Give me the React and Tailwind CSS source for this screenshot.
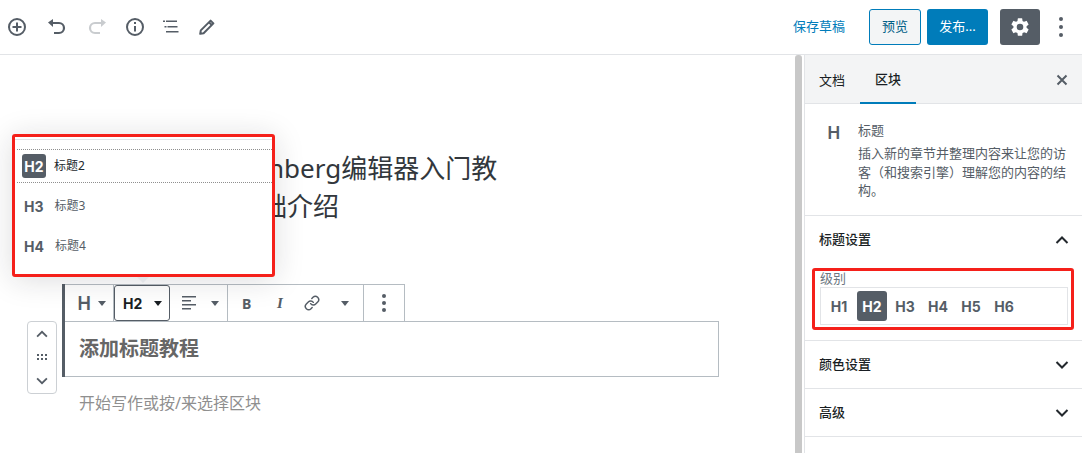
import { Link as LinkIcon } from "lucide-react";

const cjk = { fontFamily: '"Noto Sans", "Noto Sans CJK SC", sans-serif' };

function Caret({ className = "text-[#555d66]" }) {
  return (
    <svg width="8" height="5" viewBox="0 0 8 5" className={className}>
      <path d="M0 0h8L4 5z" fill="currentColor" />
    </svg>
  );
}

function Chevron({ up, size = 18, className = "text-[#23282d]" }) {
  return (
    <svg width={size} height={size} viewBox="0 0 18 18" className={className} fill="none" stroke="currentColor" strokeWidth="2">
      {up ? <path d="M3.5 12L9 6.5l5.5 5.5" /> : <path d="M3.5 6L9 11.5 14.5 6" />}
    </svg>
  );
}

function TopBar() {
  return (
    <header className="flex h-[55px] shrink-0 items-center border-b border-[#e2e4e7] bg-white">
      <div className="flex items-center text-[#555d66]">
        <div className="flex w-[34px] justify-center">
          <svg width="20" height="20" viewBox="0 0 20 20" fill="none" stroke="currentColor" strokeWidth="2">
            <circle cx="10" cy="10" r="8" />
            <path d="M10 5.5v9M5.5 10h9" />
          </svg>
        </div>
        <div className="ml-[3px] flex w-[40px] justify-center">
          <svg width="24" height="24" viewBox="0 0 24 24" fill="none">
            <path d="M8 4L3 7.5 8 12z" fill="currentColor" />
            <path d="M7 8h7a5 5 0 0 1 0 10H9" stroke="currentColor" strokeWidth="2.2" />
          </svg>
        </div>
        <div className="flex w-[40px] justify-center text-[#c9cccf]">
          <svg width="24" height="24" viewBox="0 0 24 24" fill="none">
            <path d="M16 4l5 3.5-5 4.5z" fill="currentColor" />
            <path d="M17 8h-7a5 5 0 0 0 0 10h5" stroke="currentColor" strokeWidth="2.2" />
          </svg>
        </div>
        <div className="flex w-[36px] justify-center">
          <svg width="20" height="20" viewBox="0 0 20 20" fill="none" stroke="currentColor" strokeWidth="2">
            <circle cx="10" cy="10" r="8" />
            <path d="M10 9v5.5M10 5v2" />
          </svg>
        </div>
        <div className="flex w-[36px] justify-center">
          <svg width="16" height="14" viewBox="0 0 16 14" fill="currentColor">
            <rect x="0" y="0.5" width="2" height="1.5" />
            <rect x="3" y="0.5" width="11" height="1.5" />
            <rect x="1.5" y="6" width="2" height="1.5" />
            <rect x="4.5" y="6" width="10" height="1.5" />
            <rect x="3" y="11" width="2" height="1.5" />
            <rect x="5" y="11" width="10.5" height="1.5" />
          </svg>
        </div>
        <div className="flex w-[36px] justify-center">
          <svg width="18" height="18" viewBox="0 0 18 18" fill="none" stroke="currentColor" strokeWidth="2">
            <path d="M2.2 15.8l.6-3.4L12.6 2.6l2.8 2.8-9.8 9.8z" strokeLinejoin="round" />
            <path d="M11 4.2l2.8 2.8" />
          </svg>
        </div>
      </div>
      <div className="ml-auto flex items-center">
        <span className="text-[13px] text-[#007cba]">保存草稿</span>
        <button className="ml-[24px] h-[36px] w-[52px] rounded-[3px] border border-[#007cba] bg-[#f3f5f6] text-[13px] text-[#016087]">
          预览
        </button>
        <button className="ml-[6px] h-[36px] w-[61px] rounded-[3px] bg-[#007cba] text-[13px] text-white">发布...</button>
        <button className="ml-[12px] flex h-[36px] w-[40px] items-center justify-center rounded-[3px] bg-[#555d66] text-white">
          <svg width="22" height="22" viewBox="0 0 24 24" fill="currentColor">
            <path d="M19.14 12.94c.04-.3.06-.61.06-.94s-.02-.64-.07-.94l2.03-1.58a.49.49 0 0 0 .12-.61l-1.92-3.32a.49.49 0 0 0-.59-.22l-2.39.96a7 7 0 0 0-1.62-.94l-.36-2.54a.48.48 0 0 0-.48-.41h-3.84a.48.48 0 0 0-.47.41l-.36 2.54c-.59.24-1.13.57-1.62.94l-2.39-.96a.49.49 0 0 0-.59.22L2.74 8.87a.48.48 0 0 0 .12.61l2.03 1.58c-.05.3-.09.63-.09.94s.02.64.07.94l-2.03 1.58a.49.49 0 0 0-.12.61l1.92 3.32c.12.22.37.29.59.22l2.39-.96c.5.38 1.03.7 1.62.94l.36 2.54c.05.24.24.41.48.41h3.84c.24 0 .44-.17.47-.41l.36-2.54a7 7 0 0 0 1.62-.94l2.39.96c.22.08.47 0 .59-.22l1.92-3.32a.48.48 0 0 0-.12-.61l-2.01-1.58zM12 15.6A3.6 3.6 0 1 1 12 8.4a3.6 3.6 0 0 1 0 7.2z" />
          </svg>
        </button>
        <div className="flex w-[42px] flex-col items-center gap-[4px]">
          <span className="h-[4px] w-[4px] rounded-full bg-[#555d66]" />
          <span className="h-[4px] w-[4px] rounded-full bg-[#555d66]" />
          <span className="h-[4px] w-[4px] rounded-full bg-[#555d66]" />
        </div>
      </div>
    </header>
  );
}

function HeadingPopover() {
  return (
    <div className="absolute left-[12px] top-[79px] z-20 h-[143px] w-[263px] rounded-[3px] border-[3px] border-[#f5201a] bg-white shadow-[0_3px_30px_rgba(25,30,35,0.15)]">
      <div className="mt-[2px] border-t border-[#e2e4e7]" />
      <div className="pl-[2px] pt-[9px]">
        <div className="flex h-[34px] items-center gap-[8px] border-y border-dotted border-[#8f8f8f] pl-[5px]">
          <span className="flex h-[24px] w-[24px] items-center justify-center rounded-[3px] bg-[#555d66] text-[14px] font-bold text-white" style={{ fontFamily: "Inter, sans-serif" }}>
            H2
          </span>
          <span className="text-[12px] text-[#23282d]">标题2</span>
        </div>
        <div className="flex h-[40px] items-center gap-[11px] pl-[7px] pt-[6px]">
          <span className="text-[14px] font-bold text-[#555d66]" style={{ fontFamily: "Inter, sans-serif" }}>H3</span>
          <span className="text-[12px] text-[#555d66]">标题3</span>
        </div>
        <div className="flex h-[40px] items-center gap-[11px] pl-[7px] pt-[6px]">
          <span className="text-[14px] font-bold text-[#555d66]" style={{ fontFamily: "Inter, sans-serif" }}>H4</span>
          <span className="text-[12px] text-[#555d66]">标题4</span>
        </div>
      </div>
      <span className="absolute left-[122px] top-[140px] h-0 w-0 border-x-[6px] border-t-[6px] border-x-transparent border-t-[#e2e4e7]" />
    </div>
  );
}

function BlockToolbar() {
  return (
    <div className="flex h-[37px] w-[340px] border border-b-0 border-l-0 border-[#b5bcc2] bg-white">
      <div className="flex w-[49px] items-center gap-[7px] border-r border-[#b5bcc2] pl-[12px]">
        <span className="text-[19px] font-semibold leading-none text-[#555d66]">H</span>
        <Caret />
      </div>
      <div className="flex h-[36px] w-[56px] items-center gap-[12px] rounded-[3px] border border-[#555d66] pl-[8px]">
        <span className="text-[14px] font-bold text-[#191e23]" style={{ fontFamily: "Inter, sans-serif" }}>H2</span>
        <Caret className="text-[#191e23]" />
      </div>
      <div className="flex w-[58px] items-center gap-[14px] border-r border-[#b5bcc2] pl-[12px]">
        <svg width="15" height="14" viewBox="0 0 15 14" fill="#555d66">
          <rect y="0" width="14" height="1.5" />
          <rect y="4" width="9" height="1.5" />
          <rect y="8" width="14" height="1.5" />
          <rect y="12" width="9" height="1.5" />
        </svg>
        <Caret />
      </div>
      <div className="flex w-[136px] items-center border-r border-[#b5bcc2] pl-[14px] text-[#555d66]">
        <span className="w-[10px] text-[14px] font-bold">B</span>
        <span className="ml-[25px] w-[10px] text-[15px] font-bold italic" style={{ fontFamily: '"Liberation Serif", serif' }}>I</span>
        <LinkIcon size={16} strokeWidth={2.2} className="ml-[17px]" />
        <span className="ml-[21px]"><Caret /></span>
      </div>
      <div className="flex flex-1 flex-col items-center justify-center gap-[3px]">
        <span className="h-[4px] w-[4px] rounded-full bg-[#555d66]" />
        <span className="h-[4px] w-[4px] rounded-full bg-[#555d66]" />
        <span className="h-[4px] w-[4px] rounded-full bg-[#555d66]" />
      </div>
    </div>
  );
}

function Editor() {
  return (
    <main className="relative flex-1 bg-white">
      <HeadingPopover />
      <h1 className="ml-[79px] mt-[94px] h-[76px] w-[470px] text-[26px] font-normal leading-[38px] text-[#32373c]">
        新手必看：Gutenberg编辑器入门教程：第一部分基础介绍
      </h1>
      <div className="mt-[59px] flex gap-[5px] pl-[27px]">
        <div className="mt-[37px] flex h-[73px] w-[30px] flex-col items-center justify-between rounded-[4px] border border-[#ccd0d4] bg-white py-[4px]">
          <Chevron up size={16} className="text-[#555d66]" />
          <svg width="11" height="7" viewBox="0 0 11 7" fill="#555d66">
            <rect x="0" y="0" width="2" height="2" /><rect x="4" y="0" width="2" height="2" /><rect x="8" y="0" width="2" height="2" />
            <rect x="0" y="4" width="2" height="2" /><rect x="4" y="4" width="2" height="2" /><rect x="8" y="4" width="2" height="2" />
          </svg>
          <Chevron size={16} className="text-[#555d66]" />
        </div>
        <div>
          <div className="border-l-[3px] border-[#555d66]">
            <BlockToolbar />
            <div className="flex h-[56px] w-[654px] items-center border border-l-0 border-[#b5bcc2] pl-[14px]">
              <span className="text-[20px] font-bold text-[#666]">添加标题教程</span>
            </div>
          </div>
          <p className="mt-[13px] pl-[17px] text-[16px] leading-[26px] text-[#8f8f8f]">开始写作或按/来选择区块</p>
        </div>
      </div>
    </main>
  );
}

function PanelRow({ title, open }) {
  return (
    <div className="flex h-[47px] items-center justify-between pl-[14px] pr-[11px]">
      <span className="text-[13px] font-medium text-[#191e23]">{title}</span>
      <Chevron up={open} />
    </div>
  );
}

function Sidebar() {
  const levels = ["H1", "H2", "H3", "H4", "H5", "H6"];
  return (
    <aside className="ml-[2px] flex w-[278px] shrink-0 flex-col border-l border-[#e2e4e7] bg-white">
      <div className="flex h-[49px] items-stretch border-b border-[#e2e4e7] bg-[#f3f4f5]">
        <span className="ml-[14px] flex items-center pt-[3px] text-[13px] text-[#191e23]">文档</span>
        <span className="-mb-px ml-[15px] flex w-[56px] items-center justify-center border-b-2 border-[#007cba] pt-[3px] text-[13px] font-medium text-[#191e23]">区块</span>
        <span className="ml-auto mr-[14px] flex items-center pt-[2px] text-[#555d66]">
          <svg width="12" height="12" viewBox="0 0 12 12" fill="none" stroke="currentColor" strokeWidth="2">
            <path d="M1.5 1.5l9 9M10.5 1.5l-9 9" />
          </svg>
        </span>
      </div>
      <div className="flex h-[112px] border-b border-[#e2e4e7] pl-[22px] pt-[16px]">
        <span className="w-[31px] text-[18px] font-semibold leading-[24px] text-[#555d66]">H</span>
        <div className="w-[212px]">
          <div className="text-[13px] leading-[20px] text-[#555d66]">标题</div>
          <p className="mt-[4px] text-[13px] leading-[18.5px] text-[#555d66]">
            插入新的章节并整理内容来让您的访客（和搜索引擎）理解您的内容的结构。
          </p>
        </div>
      </div>
      <div className="h-[125px] border-b border-[#e2e4e7]">
        <PanelRow title="标题设置" open />
        <div className="relative ml-[15px] mr-[13px] mt-[6px]">
          <div className="text-[13px] leading-[18px] text-[#6c7781]">级别</div>
          <div className="flex h-[38px] w-[248px] items-center gap-[3px] border border-[#e2e4e7] pl-[3px]" style={{ fontFamily: "Inter, sans-serif" }}>
            {levels.map((h) => (
              <span
                key={h}
                className={
                  h === "H2"
                    ? "flex h-[30px] w-[30px] items-center justify-center rounded-[3px] bg-[#555d66] text-[14px] font-bold text-white"
                    : "flex h-[30px] w-[30px] items-center justify-center text-[14px] font-bold text-[#555d66]"
                }
              >
                {h}
              </span>
            ))}
          </div>
          <div className="pointer-events-none absolute -left-[8px] -top-[1px] h-[62px] w-[262px] rounded-[3px] border-[3px] border-[#f5201a]" />
        </div>
      </div>
      <div className="h-[48px] border-b border-[#e2e4e7]"><PanelRow title="颜色设置" /></div>
      <div className="h-[48px] border-b border-[#e2e4e7]"><PanelRow title="高级" /></div>
    </aside>
  );
}

export default function App() {
  return (
    <div className="flex h-[453px] w-[1082px] flex-col overflow-hidden bg-white" style={cjk}>
      <TopBar />
      <div className="flex flex-1 overflow-hidden">
        <Editor />
        <div className="w-[7px] shrink-0 rounded-t-[3px] bg-[#c8c8c8]" />
        <Sidebar />
      </div>
    </div>
  );
}
